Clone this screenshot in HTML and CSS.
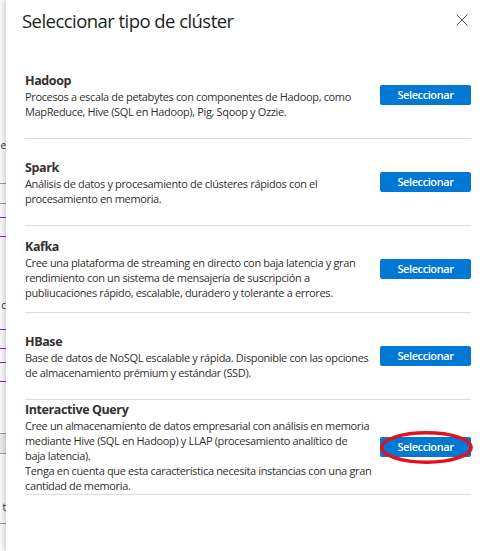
FILE: index.html
```html
<!DOCTYPE html>
<html lang="es">
<head>
<meta charset="utf-8">
<title>Seleccionar tipo de clúster</title>
<link rel="stylesheet" href="styles.css">
</head>
<body>
<div class="screen">
  <div class="backdrop" aria-hidden="true">
    <div class="bd-text bd-t1">e</div>
    <div class="bd-line bd-l1"></div>
    <div class="bd-line bd-l2"></div>
    <div class="bd-line purple bd-p1"></div>
    <div class="bd-line purple bd-p2"></div>
    <div class="bd-text bd-t2">c</div>
    <div class="bd-line purple bd-p3"></div>
    <div class="bd-line purple bd-p4"></div>
    <div class="bd-line purple bd-p5"></div>
    <div class="bd-line purple bd-p6"></div>
    <div class="bd-block"></div>
    <div class="bd-text bd-t3">t</div>
    <div class="bd-line bd-l3"></div>
  </div>

  <section class="panel">
    <header class="panel-head">
      <h1 class="panel-title">Seleccionar tipo de clúster</h1>
      <button class="close" aria-label="Cerrar">
        <svg width="12" height="12" viewBox="0 0 12 12"><path d="M0.5 0.5 L11.5 11.5 M11.5 0.5 L0.5 11.5" stroke="#605e5c" stroke-width="1" fill="none"/></svg>
      </button>
    </header>

    <ul class="types">
      <li class="type">
        <div class="type-info">
          <h2 class="type-name">Hadoop</h2>
          <p class="type-desc">Procesos a escala de petabytes con componentes de Hadoop, como<br>MapReduce, Hive (SQL en Hadoop), Pig, Sqoop y Ozzie.</p>
        </div>
        <div class="type-action"><button class="select">Seleccionar</button></div>
      </li>
      <li class="type">
        <div class="type-info">
          <h2 class="type-name">Spark</h2>
          <p class="type-desc">Análisis de datos y procesamiento de clústeres rápidos con el<br>procesamiento en memoria.</p>
        </div>
        <div class="type-action"><button class="select">Seleccionar</button></div>
      </li>
      <li class="type">
        <div class="type-info">
          <h2 class="type-name">Kafka</h2>
          <p class="type-desc">Cree una plataforma de streaming en directo con baja latencia y gran<br>rendimiento con un sistema de mensajería de suscripción a<br>publiucaciones rápido, escalable, duradero y tolerante a errores.</p>
        </div>
        <div class="type-action"><button class="select">Seleccionar</button></div>
      </li>
      <li class="type">
        <div class="type-info">
          <h2 class="type-name">HBase</h2>
          <p class="type-desc">Base de datos de NoSQL escalable y rápida. Disponible con las opciones<br>de almacenamiento prémium y estándar (SSD).</p>
        </div>
        <div class="type-action"><button class="select">Seleccionar</button></div>
      </li>
      <li class="type">
        <div class="type-info">
          <h2 class="type-name">Interactive Query</h2>
          <p class="type-desc">Cree un almacenamiento de datos empresarial con análisis en memoria<br>mediante Hive (SQL en Hadoop) y LLAP (procesamiento analítico de<br>baja latencia).</p>
          <p class="type-desc">Tenga en cuenta que esta característica necesita instancias con una gran<br>cantidad de memoria.</p>
        </div>
        <div class="type-action">
          <button class="select">Seleccionar</button>
          <svg class="highlight" viewBox="0 0 93 33" aria-hidden="true"><ellipse cx="46.5" cy="16.5" rx="44.7" ry="14.7" fill="none" stroke="#e3101f" stroke-width="3.4"/></svg>
        </div>
      </li>
    </ul>
  </section>
</div>
</body>
</html>
```

FILE: styles.css
```css
* { box-sizing: border-box; }

html, body {
  margin: 0;
  padding: 0;
  background: #ffffff;
}

body {
  width: 488px;
  height: 551px;
  overflow: hidden;
  font-family: "Open Sans", "Noto Sans", sans-serif;
  color: #323130;
}

.screen {
  display: flex;
  height: 551px;
}

/* page visible behind the side panel */
.backdrop {
  width: 6px;
  flex: none;
  overflow: hidden;
  display: flex;
  flex-direction: column;
  background: #fbfbfb;
}

.bd-text {
  height: 12px;
  line-height: 12px;
  font-size: 10px;
  text-align: right;
  white-space: nowrap;
  color: #323130;
}

.bd-line {
  height: 1px;
  flex: none;
  background: #a19f9d;
}
.bd-line.purple { background: #8a2da5; }

.bd-t1 { margin-top: 139px; }
.bd-l1 { margin-top: 32px; }
.bd-l2 { margin-top: 19px; }
.bd-p1 { margin-top: 13px; }
.bd-p2 { margin-top: 18px; }
.bd-t2 { margin-top: 62px; }
.bd-p3 { margin-top: 18px; }
.bd-p4 { margin-top: 18px; }
.bd-p5 { margin-top: 13px; }
.bd-p6 { margin-top: 18px; }
.bd-block {
  margin-top: 51px;
  height: 21px;
  flex: none;
  background: #ecebea;
  border-top: 1px solid #a19f9d;
  border-bottom: 1px solid #a19f9d;
}
.bd-t3 { margin-top: 47px; }
.bd-l3 { margin-top: 10px; }

/* side panel */
.panel {
  flex: 1;
  background: #ffffff;
  box-shadow: -2px 0 5px rgba(0, 0, 0, 0.18);
  padding: 0 17px 0 16px;
  position: relative;
}

.panel-head {
  display: flex;
  align-items: center;
  justify-content: space-between;
  height: 40px;
  margin-bottom: 12px;
}

.panel-title {
  margin: 0;
  font-size: 18.5px;
  font-weight: 400;
  letter-spacing: -0.55px;
  color: #201f1e;
}

.close {
  border: 0;
  background: none;
  padding: 0;
  width: 12px;
  height: 12px;
  margin-right: 3px;
  display: flex;
}

.types {
  list-style: none;
  margin: 0 0 0 3px;
  padding: 0;
}

.type {
  display: flex;
  align-items: center;
  justify-content: space-between;
  min-height: 87px;
  padding: 1px 0;
  border-bottom: 1px solid #dcdcdc;
}

.type-name {
  margin: 0;
  font-size: 12.5px;
  line-height: 17px;
  font-weight: 700;
  letter-spacing: -0.4px;
  color: #323130;
}

.type-desc {
  margin: 0;
  font-size: 11px;
  line-height: 15px;
  letter-spacing: -0.35px;
  white-space: nowrap;
  color: #323130;
}

.type-action {
  position: relative;
  flex: none;
}

.select {
  display: block;
  width: 91px;
  height: 20px;
  padding: 0;
  border: 0;
  border-radius: 2px;
  background: #0078d4;
  color: #ffffff;
  font-family: "Open Sans", "Noto Sans", sans-serif;
  font-size: 11px;
  font-weight: 600;
  letter-spacing: -0.4px;
  line-height: 20px;
}

.highlight {
  position: absolute;
  left: 0;
  top: -6px;
  width: 93px;
  height: 33px;
}
```
